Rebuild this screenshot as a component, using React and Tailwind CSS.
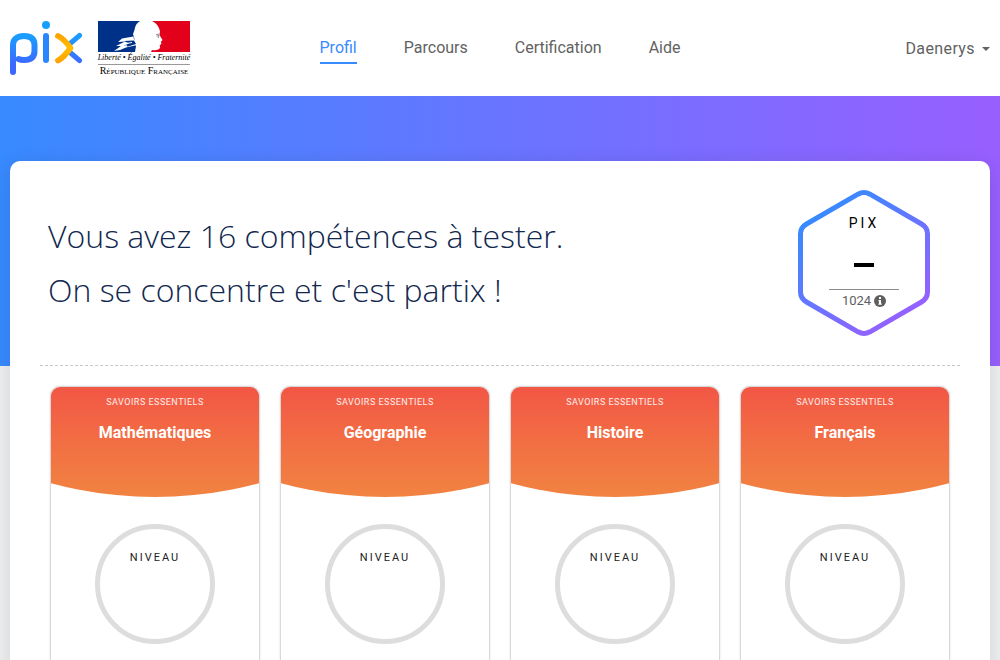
import { useId } from "react";

const navLinks = [
  { label: "Profil", active: true },
  { label: "Parcours" },
  { label: "Certification" },
  { label: "Aide" },
];

const subjects = ["Mathématiques", "Géographie", "Histoire", "Français"];

function PixLogo() {
  return (
    <svg viewBox="0 0 73 54" className="h-[54px] w-[73px]" role="img" aria-label="Pix">
      <defs>
        <linearGradient id="pix-blue" gradientUnits="userSpaceOnUse" x1="0" y1="0" x2="0" y2="54">
          <stop offset="0" stopColor="#12a3ff" />
          <stop offset="0.3" stopColor="#1a9cff" />
          <stop offset="0.8" stopColor="#3d68ff" />
          <stop offset="1" stopColor="#3d68ff" />
        </linearGradient>
        <linearGradient id="pix-yellow" gradientUnits="userSpaceOnUse" x1="0" y1="12" x2="0" y2="42">
          <stop offset="0" stopColor="#ff9f00" />
          <stop offset="0.5" stopColor="#ffbe00" />
          <stop offset="1" stopColor="#ff9f00" />
        </linearGradient>
      </defs>
      <g fill="none" stroke="url(#pix-blue)" strokeWidth="6" strokeLinecap="round" strokeLinejoin="round">
        <path d="M3 51V24C3 18 7 15 14 15C21 15 24.500 18 24.500 24V30C24.500 36 21 39 14 39C11.500 39 10 38.700 8.500 38" />
        <path d="M36 15V39" stroke="#2a86ff" />
        <path d="M59 23.500L69.500 14.500M59 30.500L69.500 39.500" strokeWidth="5" />
      </g>
      <circle cx="36" cy="4" r="4" fill="#179fff" />
      <path d="M48 15C53 17.500 57 22 60.500 27C57 32 53 37 48 39.500" fill="none" stroke="url(#pix-yellow)" strokeWidth="5.800" strokeLinecap="round" strokeLinejoin="round" />
    </svg>
  );
}

function RepublicLogo() {
  return (
    <div className="flex w-[92px] flex-col items-center whitespace-nowrap font-['Liberation_Serif',serif] text-black">
      <svg viewBox="0 0 92 31" className="h-[31px] w-[92px]" aria-hidden="true">
        <path d="M0 0H42C38.500 2 37 5 36.500 9L35 13L36.500 18L35 22L38 25L37 31H0Z" fill="#003189" />
        <path d="M54 0H92V31H53L54 29C58 29.500 61.500 29 62 26.500L61.700 24.500L63.500 22.500L62.800 21L64.500 19L61.500 14L62 10.500C61 6 59 2.500 54 0Z" fill="#e2001a" />
        <path d="M35.500 15.500L24 17.500L20 21L27 20.500L18 25L23 25L16 30L22 29L28 26.500L37 24.500Z" fill="#fff" />
        <path d="M26 20L36 19.500L38 23L30 25.500L26 24.500L31 22.500Z" fill="#003189" />
        <path d="M28 22.500L34 21.500M21 28.500L29 24" fill="none" stroke="#fff" strokeWidth="1" />
        <path d="M58 13.500L61.500 13M58.500 15L61 14.500L60 17" fill="none" stroke="#777" strokeWidth="0.800" />
      </svg>
      <span className="text-[8px] italic leading-[12px]">Liberté • Égalité • Fraternité</span>
      <span className="w-full border-t border-[#999] text-center text-[10px] leading-[11px] [font-variant-caps:small-caps]">
        République Française
      </span>
    </div>
  );
}

function Header() {
  return (
    <header className="grid h-24 grid-cols-[1fr_auto_1fr] items-center bg-white px-2.5 text-[#626262]">
      <div className="flex items-start gap-[15px]">
        <PixLogo />
        <RepublicLogo />
      </div>
      <nav aria-label="Navigation principale">
        <ul className="flex gap-[47px]">
          {navLinks.map(({ label, active }) => (
            <li key={label}>
              <a
                href="#"
                aria-current={active ? "page" : undefined}
                className={
                  active
                    ? "block border-b-2 border-[#388aff] pb-0.5 pt-1 text-base text-[#388aff]"
                    : "block border-b-2 border-transparent pb-0.5 pt-1 text-base"
                }
              >
                {label}
              </a>
            </li>
          ))}
        </ul>
      </nav>
      <button type="button" className="flex items-center gap-[7px] justify-self-end pt-0.5 text-base tracking-wide">
        Daenerys
        <svg viewBox="0 0 8 4" className="h-1 w-2" aria-hidden="true">
          <path d="M0 0H8L4 4Z" fill="currentColor" />
        </svg>
      </button>
    </header>
  );
}

function PixScore() {
  return (
    <div className="grid h-[148px] w-[132px] shrink-0 *:[grid-area:1/1]">
      <svg viewBox="0 0 132 148" className="h-full w-full" aria-hidden="true">
        <defs>
          <linearGradient id="hexagon" x1="0.2" y1="0.1" x2="0.8" y2="0.95">
            <stop offset="0" stopColor="#388aff" />
            <stop offset="1" stopColor="#985fff" />
          </linearGradient>
        </defs>
        <path
          d="M60 5.200Q66 2 72 5.200L123.500 35Q129.500 38.500 129.500 45V103Q129.500 109.500 123.500 113L72 142.800Q66 146 60 142.800L8.500 113Q2.500 109.500 2.500 103V45Q2.500 38.500 8.500 35Z"
          fill="#fff"
          stroke="url(#hexagon)"
          strokeWidth="5"
        />
      </svg>
      <div className="flex flex-col items-center pt-6">
        <span className="text-sm leading-5 tracking-[3px] text-black">PIX</span>
        <span className="flex h-14 items-center pt-2">
          <span className="h-1 w-5 bg-black" role="img" aria-label="Aucun pix" />
        </span>
        <span className="flex w-[70px] items-center justify-center gap-[3px] border-t border-[#8b8b8b] text-[13px] leading-[22px] text-[#5e5e5e]">
          1024
          <svg viewBox="0 0 12 12" className="size-3" aria-hidden="true">
            <circle cx="6" cy="6" r="6" fill="#5e5e5e" />
            <path d="M5 2h2v2H5zM4.500 5H7v3.500h.7V9.700H4.400V8.500H5V6.200h-.5z" fill="#fff" />
          </svg>
        </span>
      </div>
    </div>
  );
}

function SubjectCard({ title }) {
  const id = useId();
  return (
    <article
      aria-labelledby={id}
      className="overflow-hidden rounded-[10px] border border-[#d9d9d9] bg-white pb-14 shadow-[0_0_2px_rgba(0,0,0,0.15)]"
    >
      <div className="flex h-[110px] flex-col items-center bg-linear-to-b from-[#f25645] to-[#f18341] pt-2 text-white [clip-path:ellipse(190%_393px_at_50%_-283px)]">
        <span className="text-[9px] uppercase leading-[14px] tracking-[0.5px] text-white/90">Savoirs essentiels</span>
        <h2 id={id} className="pt-3 text-base font-bold">
          {title}
        </h2>
      </div>
      <div className="mx-auto mt-[27px] flex size-[120px] justify-center rounded-full border-[5px] border-[#ddd] pt-[21px]">
        <span className="text-[11px] uppercase leading-4 tracking-[2px] text-[#222]">Niveau</span>
      </div>
    </article>
  );
}

export default function App() {
  return (
    <div className="min-h-screen bg-[#eeeff1] font-[Roboto,sans-serif]">
      <Header />
      <main className="bg-[linear-gradient(to_right,#388aff,#985fff)] bg-[length:100%_270px] bg-no-repeat px-2.5 pt-[65px]">
        <div className="rounded-[10px] bg-white px-[30px] shadow-[0_4px_20px_rgba(0,0,0,0.12)]">
          <section className="flex items-center justify-between border-b border-dashed border-[#c8c8c8] py-7 pl-2 pr-[30px]">
            <h1 className="font-['Open_Sans',sans-serif] text-[32px] font-light leading-[54px] text-[#12284f]">
              Vous avez 16 compétences à tester.
              <br />
              On se concentre et c'est partix !
            </h1>
            <PixScore />
          </section>
          <section aria-label="Compétences" className="grid grid-cols-4 gap-5 px-2.5 pt-5">
            {subjects.map((title) => (
              <SubjectCard key={title} title={title} />
            ))}
          </section>
        </div>
      </main>
    </div>
  );
}
